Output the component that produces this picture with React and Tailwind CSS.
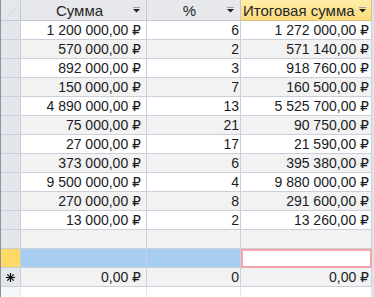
import React from 'react';

const rows = [
    ['1 200 000,00 ₽', '6', '1 272 000,00 ₽'],
    ['570 000,00 ₽', '2', '571 140,00 ₽'],
    ['892 000,00 ₽', '3', '918 760,00 ₽'],
    ['150 000,00 ₽', '7', '160 500,00 ₽'],
    ['4 890 000,00 ₽', '13', '5 525 700,00 ₽'],
    ['75 000,00 ₽', '21', '90 750,00 ₽'],
    ['27 000,00 ₽', '17', '21 590,00 ₽'],
    ['373 000,00 ₽', '6', '395 380,00 ₽'],
    ['9 500 000,00 ₽', '4', '9 880 000,00 ₽'],
    ['270 000,00 ₽', '8', '291 600,00 ₽'],
    ['13 000,00 ₽', '2', '13 260,00 ₽'],
];

function Arrow() {
    return (
        <svg width="9" height="6" viewBox="0 0 9 6" className="shrink-0">
            <rect x="1" y="0" width="7" height="1" fill="#9aa0a8" />
            <polygon points="1,2 8,2 4.5,5.5" fill="#1f1f1f" />
        </svg>
    );
}

export default function App() {
    const cell = 'h-full border-r border-b border-[#c9d0dc] flex items-center justify-end';
    return (
        <div
            className="w-[374px] h-[297px] overflow-hidden flex bg-[#dfe2e7] text-[14px] text-[#1a1c24] leading-none"
            style={{ fontFamily: '"Liberation Sans", "DejaVu Sans", sans-serif' }}
        >
            {/* left edge */}
            <div className="w-px h-full bg-[#8d939c]" />

            <div className="flex flex-col w-[371px] bg-white">
                {/* header */}
                <div className="flex h-[21px] shrink-0 text-[15px] text-[#262626]">
                    <div className="w-[20px] h-full bg-[#e4e7ec] border-r border-b border-[#c3cad5] relative">
                        <svg width="20" height="20" viewBox="0 0 20 20" className="absolute left-0 top-0">
                            <defs>
                                <linearGradient id="tri" x1="0" y1="0" x2="1" y2="1">
                                    <stop offset="0" stopColor="#c3c8d0" />
                                    <stop offset="1" stopColor="#eef0f3" />
                                </linearGradient>
                            </defs>
                            <polygon points="5,17 16,6 16,17" fill="url(#tri)" />
                        </svg>
                    </div>
                    <div className="w-[126px] h-full bg-[#e6e8ec] border-r border-b border-[#c3cad5] flex items-center pl-[6px] pr-[5px]">
                        <span className="flex-1 text-center">Сумма</span>
                        <Arrow />
                    </div>
                    <div className="w-[94px] h-full bg-[#e6e8ec] border-r border-b border-[#c3cad5] flex items-center pl-[6px] pr-[5px]">
                        <span className="flex-1 text-center">%</span>
                        <Arrow />
                    </div>
                    <div className="w-[131px] h-full bg-gradient-to-b from-[#feeea9] to-[#fbdc7c] border-r border-b border-[#d9c27a] flex items-center pl-[2px] pr-[4px]">
                        <span className="flex-1 text-left">Итоговая сумма</span>
                        <Arrow />
                    </div>
                </div>

                {/* data rows */}
                {rows.map((r, i) => (
                    <div key={i} className={`flex h-[19px] shrink-0 ${i % 2 ? 'bg-[#f2f2f2]' : 'bg-white'}`}>
                        <div className="w-[20px] h-full bg-[#e3e6eb] border-r border-b border-[#c9d0dc]" />
                        <div className={`w-[126px] pr-[5px] ${cell}`}>{r[0]}</div>
                        <div className={`w-[94px] pr-[1px] ${cell}`}>{r[1]}</div>
                        <div className={`w-[131px] pr-[2px] ${cell}`}>{r[2]}</div>
                    </div>
                ))}

                {/* empty row */}
                <div className="flex h-[19px] shrink-0 bg-[#f2f2f2]">
                    <div className="w-[20px] h-full bg-[#e3e6eb] border-r border-b border-[#c9d0dc]" />
                    <div className={`w-[126px] ${cell}`} />
                    <div className={`w-[94px] ${cell}`} />
                    <div className={`w-[131px] ${cell}`} />
                </div>

                {/* selected row */}
                <div className="flex h-[19px] shrink-0">
                    <div className="w-[20px] h-full bg-[#fed966] border-r border-b border-[#c9d0dc]" />
                    <div className="w-[126px] h-full bg-[#a7cdf0] border-r border-b border-[#c9d0dc]" />
                    <div className="w-[94px] h-full bg-[#a7cdf0] border-r border-b border-[#c9d0dc]" />
                    <div className="w-[131px] h-full bg-white border-2 border-[#f5a4aa]" />
                </div>

                {/* new record row */}
                <div className="flex h-[19px] shrink-0 bg-[#f2f2f2]">
                    <div className="w-[20px] h-full bg-[#e3e6eb] border-r border-b border-[#c9d0dc] flex items-center justify-center">
                        <svg width="11" height="11" viewBox="0 0 11 11" stroke="#111" strokeWidth="1.2">
                            <line x1="5.5" y1="1" x2="5.5" y2="10" />
                            <line x1="1" y1="5.5" x2="10" y2="5.5" />
                            <line x1="2.3" y1="2.3" x2="8.7" y2="8.7" />
                            <line x1="8.7" y1="2.3" x2="2.3" y2="8.7" />
                        </svg>
                    </div>
                    <div className={`w-[126px] pr-[5px] ${cell}`}>0,00 ₽</div>
                    <div className={`w-[94px] pr-[1px] ${cell}`}>0</div>
                    <div className={`w-[131px] pr-[2px] ${cell}`}>0,00 ₽</div>
                </div>

                {/* empty area */}
                <div className="flex flex-1 bg-white">
                    <div className="w-[20px] h-full bg-[#f6f7f9] border-r border-[#e3e7ee]" />
                    <div className="w-[126px] h-full border-r border-[#e3e7ee]" />
                    <div className="w-[94px] h-full border-r border-[#e3e7ee]" />
                    <div className="w-[131px] h-full border-r border-[#e3e7ee]" />
                </div>
            </div>
        </div>
    );
}
